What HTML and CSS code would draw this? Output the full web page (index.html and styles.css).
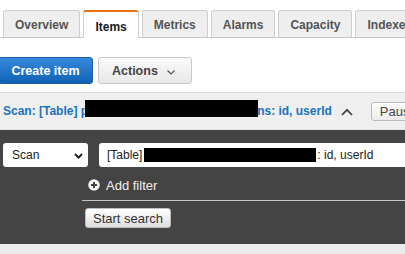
FILE: index.html
```html
<!DOCTYPE html>
<html>
<head>
<meta charset="utf-8">
<link rel="stylesheet" href="styles.css">
</head>
<body>
<div class="tabs">
  <div class="tab">Overview</div>
  <div class="tab active">Items</div>
  <div class="tab">Metrics</div>
  <div class="tab">Alarms</div>
  <div class="tab">Capacity</div>
  <div class="tab">Indexes</div>
</div>
<div class="toolbar">
  <button class="btn primary">Create item</button>
  <button class="btn secondary">Actions
    <svg class="caret" width="8" height="5" viewBox="0 0 8 5"><polyline points="0.5,0.5 4,4 7.5,0.5" fill="none" stroke="#555" stroke-width="1.2"/></svg>
  </button>
</div>
<div class="scan">
  <div class="scan-head">
    <div class="scan-title">Scan: [Table] p<span class="redact head-redact"></span>ns: id, userId</div>
    <svg class="collapse" width="12" height="8" viewBox="0 0 12 8"><polyline points="1,7 6,1.8 11,7" fill="none" stroke="#444" stroke-width="1.8"/></svg>
    <button class="pause">Pause</button>
  </div>
  <div class="scan-body">
    <div class="query-row">
      <div class="select">Scan
        <svg class="select-caret" width="9" height="6" viewBox="0 0 9 6"><polyline points="1,1 4.5,4.6 8,1" fill="none" stroke="#222" stroke-width="2"/></svg>
      </div>
      <div class="input">[Table] <span class="redact input-redact"></span>: id, userId</div>
    </div>
    <div class="filter-row">
      <svg class="plus" width="12" height="12" viewBox="0 0 12 12"><circle cx="6" cy="6" r="5.8" fill="#f2f2f2"/><path d="M6 3V9M3 6H9" stroke="#444" stroke-width="2"/></svg>
      <span>Add filter</span>
    </div>
    <div class="search-row">
      <button class="start">Start search</button>
    </div>
  </div>
</div>
<div class="footer-strip"></div>
</body>
</html>
```
FILE: styles.css
```css
html, body {
  margin: 0;
  padding: 0;
  background: #fff;
  overflow: hidden;
  font-family: "Liberation Sans", Arial, sans-serif;
}

.tabs {
  display: flex;
  gap: 3px;
  padding: 10px 0 0 3px;
  height: 27px;
  border-bottom: 1px solid #c8c8c8;
  white-space: nowrap;
}

.tab {
  box-sizing: border-box;
  height: 27px;
  display: flex;
  align-items: center;
  padding: 1px 11px 0;
  background: #eeeeee;
  border: 1px solid #cfcfcf;
  border-bottom: none;
  border-radius: 3px 3px 0 0;
  font-size: 12px;
  font-weight: bold;
  color: #545454;
  flex-shrink: 0;
}

.tab.active {
  height: 28px;
  margin-bottom: -1px;
  background: #fff;
  border-top: 2px solid #ec7211;
  color: #16191f;
  padding-top: 3px;
}

.toolbar {
  display: flex;
  gap: 5px;
  padding: 19px 0 8px;
}

.btn {
  box-sizing: border-box;
  height: 27px;
  font-family: "Liberation Sans", Arial, sans-serif;
  font-size: 12.5px;
  font-weight: bold;
  border-radius: 3px;
  display: flex;
  align-items: center;
  cursor: pointer;
}

.btn.primary {
  margin-left: -2px;
  width: 95px;
  justify-content: center;
  color: #fff;
  background: linear-gradient(#3889dd, #1062b5);
  border: 1px solid #1a5da3;
}

.btn.secondary {
  width: 94px;
  padding: 0 0 0 13px;
  color: #444;
  background: linear-gradient(#fafafa, #e8e8e8);
  border: 1px solid #c9c9c9;
}

.caret {
  margin-left: 9px;
  margin-top: 3px;
}

.scan {
  border-top: 1px solid #d9d9d9;
}

.scan-head {
  height: 36px;
  display: flex;
  align-items: center;
  padding-left: 3px;
  background: #efefef;
  border-bottom: 1px solid #e4e4e4;
  white-space: nowrap;
}

.scan-title {
  display: flex;
  align-items: center;
  font-size: 12px;
  font-weight: bold;
  color: #1a72c2;
  flex-shrink: 0;
}

.redact {
  display: inline-block;
  background: #000;
  flex-shrink: 0;
}

.head-redact {
  width: 173px;
  height: 17px;
  margin-left: -3px;
  margin-right: -1px;
  margin-bottom: 5px;
}

.collapse {
  margin-left: 9px;
  margin-top: 2px;
  flex-shrink: 0;
}

.pause {
  margin-left: 18px;
  height: 19px;
  padding: 0 8px;
  font-family: "Liberation Sans", Arial, sans-serif;
  font-size: 13px;
  color: #444;
  background: linear-gradient(#fdfdfd, #ececec);
  border: 1px solid #b9b9b9;
  border-radius: 3px;
  flex-shrink: 0;
}

.scan-body {
  background: #444444;
  padding: 13px 0 16px 3px;
}

.query-row {
  display: flex;
  gap: 11px;
  white-space: nowrap;
}

.select {
  box-sizing: border-box;
  flex: 0 0 85px;
  height: 24px;
  display: flex;
  align-items: center;
  justify-content: space-between;
  padding: 0 5px 0 9px;
  background: #fff;
  border-radius: 3px;
  font-size: 12px;
  color: #222;
}

.select-caret {
  margin-top: 1px;
}

.input {
  box-sizing: border-box;
  flex: 0 0 330px;
  height: 24px;
  display: flex;
  align-items: center;
  padding-left: 8px;
  background: #fff;
  border-radius: 3px;
  font-size: 12px;
  color: #222;
}

.input-redact {
  width: 172px;
  height: 14px;
  margin-left: 2px;
  margin-right: 1px;
  margin-bottom: 1px;
}

.filter-row {
  display: flex;
  align-items: center;
  gap: 6px;
  margin: 8px 0 0 85px;
  height: 20px;
  font-size: 13px;
  color: #f0f0f0;
}

.search-row {
  margin: 5px 0 0 79px;
  border-top: 1px solid #c4c4c4;
  padding: 7px 0 0 3px;
}

.start {
  box-sizing: border-box;
  height: 20px;
  padding: 0 7px;
  font-family: "Liberation Sans", Arial, sans-serif;
  font-size: 13px;
  color: #333;
  background: linear-gradient(#ffffff, #dedede);
  border: 1px solid #bcbcbc;
  border-radius: 3px;
}

.footer-strip {
  height: 20px;
  background: #ebebeb;
}
```
